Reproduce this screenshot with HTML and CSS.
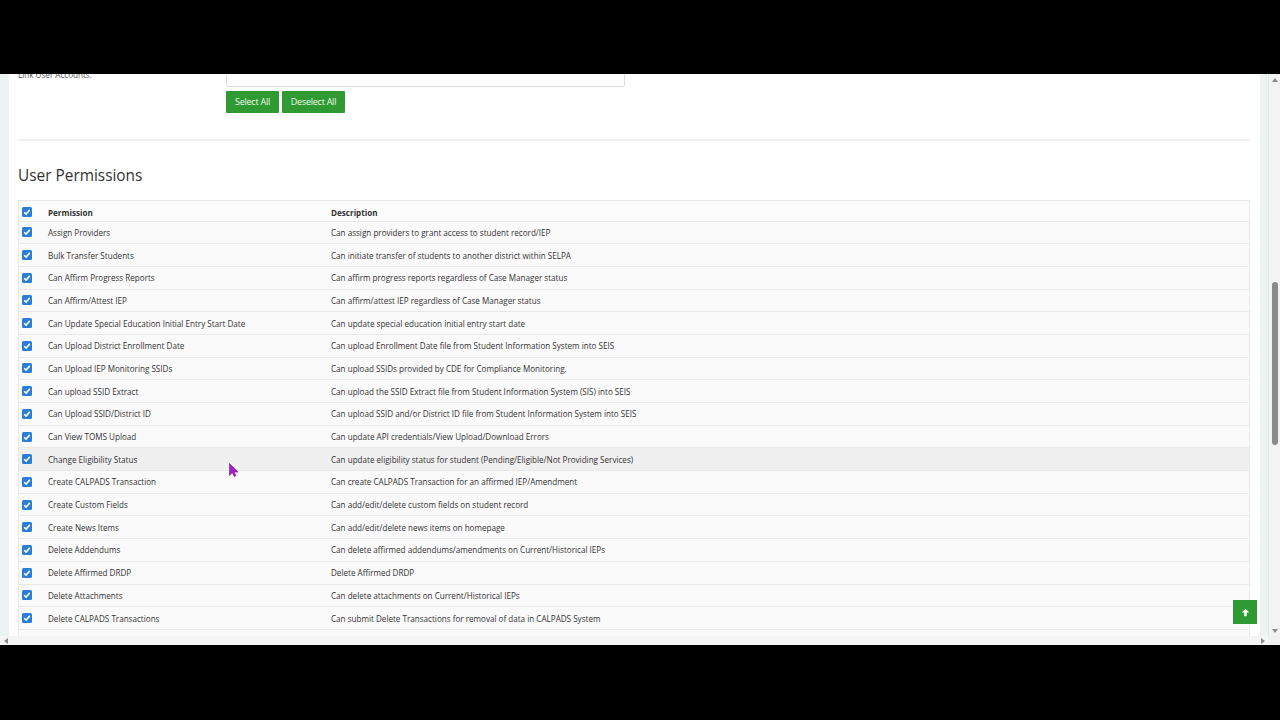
FILE: index.html
```html
<!DOCTYPE html>
<html>
<head>
<meta charset="utf-8">
<link rel="stylesheet" href="styles.css">
</head>
<body>
<div class="screen">
  <div class="viewport">
    <div class="page">
      <div class="panel">
        <div class="form-row">
          <div class="label">Link User Accounts:</div>
          <div class="field">
            <div class="input"></div>
            <div class="btns">
              <button class="btn btn-sel">Select All</button>
              <button class="btn btn-desel">Deselect All</button>
            </div>
          </div>
        </div>
        <div class="hr"></div>
        <h2 class="title">User Permissions</h2>
        <div class="table">
          <div class="row head">
            <div class="c-cb"><svg class="cb" viewBox="0 0 10 10"><rect width="10" height="10" rx="1.5" fill="#2a7fd4"/><path d="M2.2 5.2l1.9 1.9 3.7-4.2" fill="none" stroke="#fff" stroke-width="1.6"/></svg></div>
            <div class="c-perm">Permission</div>
            <div class="c-desc">Description</div>
          </div>
          <div class="row"><div class="c-cb"><svg class="cb" viewBox="0 0 10 10"><rect width="10" height="10" rx="1.5" fill="#2a7fd4"/><path d="M2.2 5.2l1.9 1.9 3.7-4.2" fill="none" stroke="#fff" stroke-width="1.6"/></svg></div><div class="c-perm">Assign Providers</div><div class="c-desc">Can assign providers to grant access to student record/IEP</div></div>
          <div class="row"><div class="c-cb"><svg class="cb" viewBox="0 0 10 10"><rect width="10" height="10" rx="1.5" fill="#2a7fd4"/><path d="M2.2 5.2l1.9 1.9 3.7-4.2" fill="none" stroke="#fff" stroke-width="1.6"/></svg></div><div class="c-perm">Bulk Transfer Students</div><div class="c-desc">Can initiate transfer of students to another district within SELPA</div></div>
          <div class="row"><div class="c-cb"><svg class="cb" viewBox="0 0 10 10"><rect width="10" height="10" rx="1.5" fill="#2a7fd4"/><path d="M2.2 5.2l1.9 1.9 3.7-4.2" fill="none" stroke="#fff" stroke-width="1.6"/></svg></div><div class="c-perm">Can Affirm Progress Reports</div><div class="c-desc">Can affirm progress reports regardless of Case Manager status</div></div>
          <div class="row"><div class="c-cb"><svg class="cb" viewBox="0 0 10 10"><rect width="10" height="10" rx="1.5" fill="#2a7fd4"/><path d="M2.2 5.2l1.9 1.9 3.7-4.2" fill="none" stroke="#fff" stroke-width="1.6"/></svg></div><div class="c-perm">Can Affirm/Attest IEP</div><div class="c-desc">Can affirm/attest IEP regardless of Case Manager status</div></div>
          <div class="row"><div class="c-cb"><svg class="cb" viewBox="0 0 10 10"><rect width="10" height="10" rx="1.5" fill="#2a7fd4"/><path d="M2.2 5.2l1.9 1.9 3.7-4.2" fill="none" stroke="#fff" stroke-width="1.6"/></svg></div><div class="c-perm">Can Update Special Education Initial Entry Start Date</div><div class="c-desc">Can update special education initial entry start date</div></div>
          <div class="row"><div class="c-cb"><svg class="cb" viewBox="0 0 10 10"><rect width="10" height="10" rx="1.5" fill="#2a7fd4"/><path d="M2.2 5.2l1.9 1.9 3.7-4.2" fill="none" stroke="#fff" stroke-width="1.6"/></svg></div><div class="c-perm">Can Upload District Enrollment Date</div><div class="c-desc">Can upload Enrollment Date file from Student Information System into SEIS</div></div>
          <div class="row"><div class="c-cb"><svg class="cb" viewBox="0 0 10 10"><rect width="10" height="10" rx="1.5" fill="#2a7fd4"/><path d="M2.2 5.2l1.9 1.9 3.7-4.2" fill="none" stroke="#fff" stroke-width="1.6"/></svg></div><div class="c-perm">Can Upload IEP Monitoring SSIDs</div><div class="c-desc">Can upload SSIDs provided by CDE for Compliance Monitoring.</div></div>
          <div class="row"><div class="c-cb"><svg class="cb" viewBox="0 0 10 10"><rect width="10" height="10" rx="1.5" fill="#2a7fd4"/><path d="M2.2 5.2l1.9 1.9 3.7-4.2" fill="none" stroke="#fff" stroke-width="1.6"/></svg></div><div class="c-perm">Can upload SSID Extract</div><div class="c-desc">Can upload the SSID Extract file from Student Information System (SIS) into SEIS</div></div>
          <div class="row"><div class="c-cb"><svg class="cb" viewBox="0 0 10 10"><rect width="10" height="10" rx="1.5" fill="#2a7fd4"/><path d="M2.2 5.2l1.9 1.9 3.7-4.2" fill="none" stroke="#fff" stroke-width="1.6"/></svg></div><div class="c-perm">Can Upload SSID/District ID</div><div class="c-desc">Can upload SSID and/or District ID file from Student Information System into SEIS</div></div>
          <div class="row"><div class="c-cb"><svg class="cb" viewBox="0 0 10 10"><rect width="10" height="10" rx="1.5" fill="#2a7fd4"/><path d="M2.2 5.2l1.9 1.9 3.7-4.2" fill="none" stroke="#fff" stroke-width="1.6"/></svg></div><div class="c-perm">Can View TOMS Upload</div><div class="c-desc">Can update API credentials/View Upload/Download Errors</div></div>
          <div class="row hover"><div class="c-cb"><svg class="cb" viewBox="0 0 10 10"><rect width="10" height="10" rx="1.5" fill="#2a7fd4"/><path d="M2.2 5.2l1.9 1.9 3.7-4.2" fill="none" stroke="#fff" stroke-width="1.6"/></svg></div><div class="c-perm">Change Eligibility Status</div><div class="c-desc">Can update eligibility status for student (Pending/Eligible/Not Providing Services)</div></div>
          <div class="row"><div class="c-cb"><svg class="cb" viewBox="0 0 10 10"><rect width="10" height="10" rx="1.5" fill="#2a7fd4"/><path d="M2.2 5.2l1.9 1.9 3.7-4.2" fill="none" stroke="#fff" stroke-width="1.6"/></svg></div><div class="c-perm">Create CALPADS Transaction</div><div class="c-desc">Can create CALPADS Transaction for an affirmed IEP/Amendment</div></div>
          <div class="row"><div class="c-cb"><svg class="cb" viewBox="0 0 10 10"><rect width="10" height="10" rx="1.5" fill="#2a7fd4"/><path d="M2.2 5.2l1.9 1.9 3.7-4.2" fill="none" stroke="#fff" stroke-width="1.6"/></svg></div><div class="c-perm">Create Custom Fields</div><div class="c-desc">Can add/edit/delete custom fields on student record</div></div>
          <div class="row"><div class="c-cb"><svg class="cb" viewBox="0 0 10 10"><rect width="10" height="10" rx="1.5" fill="#2a7fd4"/><path d="M2.2 5.2l1.9 1.9 3.7-4.2" fill="none" stroke="#fff" stroke-width="1.6"/></svg></div><div class="c-perm">Create News Items</div><div class="c-desc">Can add/edit/delete news items on homepage</div></div>
          <div class="row"><div class="c-cb"><svg class="cb" viewBox="0 0 10 10"><rect width="10" height="10" rx="1.5" fill="#2a7fd4"/><path d="M2.2 5.2l1.9 1.9 3.7-4.2" fill="none" stroke="#fff" stroke-width="1.6"/></svg></div><div class="c-perm">Delete Addendums</div><div class="c-desc">Can delete affirmed addendums/amendments on Current/Historical IEPs</div></div>
          <div class="row"><div class="c-cb"><svg class="cb" viewBox="0 0 10 10"><rect width="10" height="10" rx="1.5" fill="#2a7fd4"/><path d="M2.2 5.2l1.9 1.9 3.7-4.2" fill="none" stroke="#fff" stroke-width="1.6"/></svg></div><div class="c-perm">Delete Affirmed DRDP</div><div class="c-desc">Delete Affirmed DRDP</div></div>
          <div class="row"><div class="c-cb"><svg class="cb" viewBox="0 0 10 10"><rect width="10" height="10" rx="1.5" fill="#2a7fd4"/><path d="M2.2 5.2l1.9 1.9 3.7-4.2" fill="none" stroke="#fff" stroke-width="1.6"/></svg></div><div class="c-perm">Delete Attachments</div><div class="c-desc">Can delete attachments on Current/Historical IEPs</div></div>
          <div class="row"><div class="c-cb"><svg class="cb" viewBox="0 0 10 10"><rect width="10" height="10" rx="1.5" fill="#2a7fd4"/><path d="M2.2 5.2l1.9 1.9 3.7-4.2" fill="none" stroke="#fff" stroke-width="1.6"/></svg></div><div class="c-perm">Delete CALPADS Transactions</div><div class="c-desc">Can submit Delete Transactions for removal of data in CALPADS System</div></div>
          <div class="row"></div>
        </div>
      </div>
    </div>
    <div class="vscroll">
      <div class="arr arr-up"></div>
      <div class="track"><div class="thumb"></div></div>
      <div class="arr arr-down"></div>
    </div>
    <button class="totop"><svg viewBox="0 0 10 10" width="9" height="9"><path d="M5 0.8L9.2 5H6.4V9.2H3.6V5H0.8Z" fill="#fff"/></svg></button>
    <svg class="cursor" viewBox="0 0 9 14" width="9" height="14"><path d="M0.5 0.5V12.5L3.4 9.8L5.3 13.5L7 12.7L5.2 9.1H9Z" fill="#a21fc4" stroke="#7a148f" stroke-width="0.6"/></svg>
  </div>
  <div class="hscroll">
    <div class="harr harr-left"></div>
    <div class="hfill"></div>
    <div class="harr harr-right"></div>
    <div class="corner"></div>
  </div>
</div>
</body>
</html>
```
FILE: styles.css
```css
* { box-sizing: border-box; }
html, body { margin: 0; padding: 0; }
body {
  width: 1280px;
  height: 720px;
  background: #000;
  overflow: hidden;
  font-family: "Open Sans", "Liberation Sans", sans-serif;
}
.screen {
  margin-top: 74px;
  height: 571px;
  display: flex;
  flex-direction: column;
}
.viewport {
  position: relative;
  height: 562px;
  display: flex;
  overflow: hidden;
}
.page {
  flex: 1;
  background: #edf2f2;
  padding: 0 8px 0 9px;
  overflow: hidden;
}
.panel {
  background: #fff;
  padding: 0 10px 0 9px;
  margin-top: -20px;
  height: calc(100% + 20px);
}
.form-row {
  display: flex;
}
.label {
  width: 208px;
  padding-top: 15px;
  font-size: 8.1px;
  line-height: 12px;
  color: #555;
}
.field { display: flex; flex-direction: column; gap: 4px; }
.input {
  width: 399px;
  height: 33px;
  border: 1px solid #dcdcdc;
  border-radius: 2px;
  background: #fff;
}
.btns { display: flex; gap: 3px; }
.btn {
  height: 22px;
  border: none;
  border-radius: 1px;
  background: #2f9a31;
  color: #eef8ee;
  font-family: "Open Sans", "Liberation Sans", sans-serif;
  font-size: 9px;
  padding: 0 0 2px;
  letter-spacing: -0.25px;
}
.btn-sel { width: 53px; }
.btn-desel { width: 63px; }
.hr {
  margin-top: 26px;
  border-top: 2px solid #f0f0f0;
}
.title {
  margin: 25px 0 14px;
  font-size: 15.4px;
  line-height: 20px;
  font-weight: 400;
  color: #333;
}
.table {
  border: 1px solid #e8e8e8;
  background: #fafafa;
}
.row {
  display: flex;
  align-items: center;
  height: 22.7px;
  border-top: 1px solid #e8e8e8;
  font-size: 8.1px;
  color: #333;
}
.row.head {
  height: 19.5px;
  padding-top: 3px;
  border-top: none;
  font-weight: 700;
  color: #333;
  background: #fcfcfc;
}
.row.hover { background: #f0f0f0; }
.c-cb {
  width: 29px;
  padding-left: 3px;
  display: flex;
  align-items: center;
}
.cb { width: 10px; height: 10px; display: block; }
.c-perm { width: 283px; white-space: nowrap; }
.c-desc { flex: 1; white-space: nowrap; }
.vscroll {
  width: 12px;
  background: #f3f3f3;
  border-left: 1px solid #e2e6e6;
  display: flex;
  flex-direction: column;
}
.arr { height: 11px; display: flex; justify-content: center; align-items: center; }
.arr-up::before {
  content: "";
  border-left: 3px solid transparent;
  border-right: 3px solid transparent;
  border-bottom: 4px solid #8a8a8a;
}
.arr-down::before {
  content: "";
  border-left: 3px solid transparent;
  border-right: 3px solid transparent;
  border-top: 4px solid #8a8a8a;
}
.track { flex: 1; padding-top: 197px; display: flex; justify-content: center; }
.thumb {
  width: 6px;
  height: 163px;
  border-radius: 3px;
  background: #8b8b8b;
}
.totop {
  position: absolute;
  left: 1233px;
  top: 526px;
  width: 24px;
  height: 24px;
  border: none;
  padding: 0;
  background: #2e9a33;
  display: flex;
  align-items: center;
  justify-content: center;
}
.cursor {
  position: absolute;
  left: 229px;
  top: 389px;
}
.hscroll {
  height: 9px;
  display: flex;
  background: #f5f5f5;
}
.harr { width: 11px; display: flex; align-items: center; justify-content: center; }
.harr-left::before {
  content: "";
  border-top: 3px solid transparent;
  border-bottom: 3px solid transparent;
  border-right: 4px solid #8a8a8a;
}
.harr-right::before {
  content: "";
  border-top: 3px solid transparent;
  border-bottom: 3px solid transparent;
  border-left: 4px solid #8a8a8a;
}
.hfill { flex: 1; }
.corner { width: 12px; background: #f0f0f0; }
```
